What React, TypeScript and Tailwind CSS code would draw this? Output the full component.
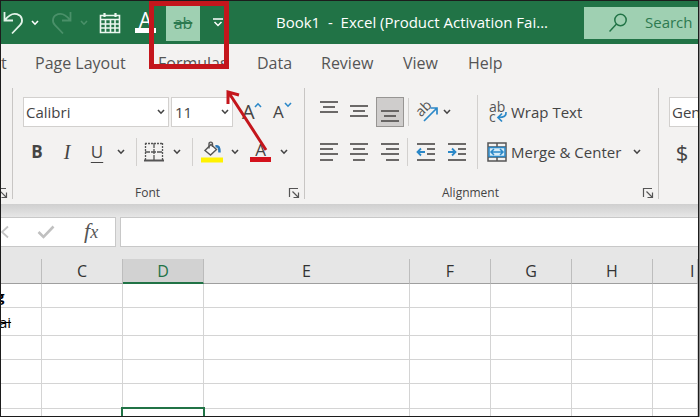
import type { ReactNode } from "react"

const columns = [
  { name: "B", width: "w-[41px]" },
  { name: "C", width: "w-[81px]" },
  { name: "D", width: "w-[81px]" },
  { name: "E", width: "w-[206px]" },
  { name: "F", width: "w-[81px]" },
  { name: "G", width: "w-[81px]" },
  { name: "H", width: "w-[81px]" },
  { name: "I", width: "" },
]

const rows = [
  { id: 1, height: "h-6" },
  { id: 2, height: "h-7" },
  { id: 3, height: "h-6" },
  { id: 4, height: "h-6" },
  { id: 5, height: "h-[25px]" },
  { id: 6, height: "h-6" },
]

const tabs = [
  { name: "Page Layout", width: "w-[94px]" },
  { name: "Formulas", width: "w-[70px]" },
  { name: "Data", width: "w-[35px]" },
  { name: "Review", width: "w-[53px]" },
  { name: "View", width: "w-9" },
  { name: "Help", width: "w-9" },
]

function Chevron({ className = "" }: { className?: string }) {
  return (
    <svg viewBox="0 0 8 6" className={`h-[6px] w-2 shrink-0 ${className}`} fill="none" stroke="currentColor" strokeWidth="1.6">
      <path d="M1 1l3 3.2L7 1" />
    </svg>
  )
}

function IconButton({ label, className = "w-5", children }: { label: string; className?: string; children: ReactNode }) {
  return (
    <button type="button" aria-label={label} className={`flex h-[30px] shrink-0 items-center justify-center ${className}`}>
      {children}
    </button>
  )
}

// Horizontal strokes of an alignment icon, each as [x1, x2, y]
function Lines({ lines, children }: { lines: number[][]; children?: ReactNode }) {
  return (
    <svg viewBox="0 0 20 30" className="h-[30px] w-5" fill="none" stroke="#5c5a58" strokeWidth="1.8">
      {lines.map(([x1, x2, y]) => (
        <path key={y} d={`M${x1} ${y}H${x2}`} />
      ))}
      {children}
    </svg>
  )
}

function Divider({ className = "h-7" }: { className?: string }) {
  return <div className={`w-px shrink-0 bg-[#d2d0ce] ${className}`} />
}

function Launcher({ label }: { label: string }) {
  return (
    <button type="button" aria-label={label} className="shrink-0">
      <svg viewBox="0 0 12 12" className="size-3" fill="none" stroke="#555" strokeWidth="1.2">
        <path d="M1.5 10V1.5H10M4.5 4.5l6 6M10.500 5.500v5h-5" />
      </svg>
    </button>
  )
}

function TitleBar() {
  return (
    <header className="flex h-[43px] shrink-0 items-center bg-[#217346] text-white">
      <button type="button" aria-label="Undo" className="ml-px">
        <svg viewBox="0 0 22 24" className="h-6 w-[22px]" fill="none" stroke="#e3f3e9" strokeWidth="1.8">
          <path d="M2.500 1v8.500H11M3 9C6.500 4.500 11 2 15 3.200c5.500 1.800 6.500 7.300 3 11L10 22.500" />
        </svg>
      </button>
      <button type="button" aria-label="Undo history" className="ml-[7px]">
        <Chevron />
      </button>
      <button type="button" aria-label="Redo" className="ml-3 text-[#4a9069]">
        <svg viewBox="0 0 22 24" className="h-6 w-[22px]" fill="none" stroke="currentColor" strokeWidth="1.8">
          <path d="M19.500 1v8.500H11M19 9C15.500 4.500 11 2 7 3.200c-5.500 1.800-6.500 7.300-3 11L12 22.500" />
        </svg>
      </button>
      <button type="button" aria-label="Redo history" className="ml-[7px] text-[#4a9069]">
        <Chevron />
      </button>
      <button type="button" aria-label="Calendar" className="ml-[11px]">
        <svg viewBox="0 0 22 22" className="size-[22px]" fill="none" stroke="#eaf6ee" strokeWidth="1.6">
          <path d="M1.500 3.500h19v17h-19zM1.500 7.500h19M1.500 12h19M1.500 16h19M6.500 7.500v13M11.500 7.500v13M16 7.500v13" />
          <path d="M5.500 1v4M16.500 1v4" strokeWidth="2.200" />
        </svg>
      </button>
      <button type="button" aria-label="Font Color" className="ml-[14px] flex w-[21px] flex-col items-center text-[21px] leading-[16px]">
        A
        <span className="h-[5px] w-full bg-white" />
      </button>
      <button type="button" aria-label="Strikethrough" className="ml-[10px] flex h-9 w-[34px] items-center justify-center bg-[#9fd0b2] text-base text-[#2d7a50]">
        <s className="decoration-2">ab</s>
      </button>
      <button type="button" aria-label="Customize Quick Access Toolbar" className="ml-[13px]">
        <svg viewBox="0 0 10 9" className="h-[9px] w-[10px]" fill="none" stroke="#fff" strokeWidth="1.500">
          <path d="M0 1h10M1.500 4L5 7.500 8.500 4" />
        </svg>
      </button>
      <h1 className="ml-[53px] w-[308px] shrink-0 whitespace-pre text-[15px]">Book1  -  Excel (Product Activation Fai...</h1>
      <label className="flex h-8 min-w-0 flex-1 items-center overflow-hidden bg-[#9fd0b2] pl-[25px] text-[#217346]">
        <svg viewBox="0 0 18 20" className="h-5 w-[18px] shrink-0" fill="none" stroke="currentColor" strokeWidth="1.500">
          <circle cx="11.500" cy="7" r="5.700" />
          <path d="M7.500 11L.5 18.500" />
        </svg>
        <input aria-label="Search" placeholder="Search" className="ml-[18px] w-full min-w-0 bg-transparent text-[15px] outline-none placeholder:text-[#2d7a50]" />
      </label>
    </header>
  )
}

function Tabs() {
  return (
    <nav className="flex h-[38px] shrink-0 items-center gap-[29px] text-base text-[#555]">
      <button type="button" aria-label="Insert" className="w-[5px] text-left">
        t
      </button>
      {tabs.map((tab) => (
        <button key={tab.name} type="button" className={`shrink-0 whitespace-nowrap text-left ${tab.width}`}>
          {tab.name}
        </button>
      ))}
    </nav>
  )
}

function FontGroup() {
  return (
    <section className="flex w-[292px] shrink-0 flex-col border-r border-[#c8c6c4] pl-[10px]">
      <div className="mt-[9px] flex items-center">
        <label className="relative">
          <select aria-label="Font" className="h-[30px] w-[146px] appearance-none border border-[#d2d0ce] bg-white pl-[2px] text-[15px]">
            <option>Calibri</option>
          </select>
          <Chevron className="pointer-events-none absolute top-3 right-1" />
        </label>
        <label className="relative ml-[2px]">
          <select aria-label="Font Size" className="h-[30px] w-[62px] appearance-none border border-[#d2d0ce] bg-white pl-[3px] text-[15px]">
            <option>11</option>
          </select>
          <Chevron className="pointer-events-none absolute top-3 right-1" />
        </label>
        <button type="button" aria-label="Increase Font Size" className="ml-[9px] flex w-5 text-xl leading-5">
          A
          <Chevron className="-ml-px rotate-180 text-[#2b88c8]" />
        </button>
        <button type="button" aria-label="Decrease Font Size" className="ml-[11px] flex w-5 text-[17px] leading-5">
          A
          <Chevron className="text-[#2b88c8]" />
        </button>
      </div>
      <div className="mt-[10px] flex items-center text-[17px]">
        <IconButton label="Bold" className="w-7"><b>B</b></IconButton>
        <IconButton label="Italic" className="ml-[2px] w-7"><i className="font-['Liberation_Serif',serif] text-xl">I</i></IconButton>
        <IconButton label="Underline" className="ml-[2px] w-7"><u className="underline-offset-4">U</u></IconButton>
        <IconButton label="Underline style" className="w-5"><Chevron /></IconButton>
        <Divider className="ml-[5px] h-7" />
        <IconButton label="Borders" className="ml-[7px] w-5">
          <svg viewBox="0 0 20 20" className="size-5" fill="none" stroke="#555" strokeWidth="1.300">
            <path d="M1 1.500h18M1.500 1v17M18.500 1v17" strokeDasharray="2 1" />
            <path d="M10 1v17M1 10h18" strokeDasharray="5 1" />
            <path d="M0 18.500h20" strokeWidth="2" />
          </svg>
        </IconButton>
        <IconButton label="Border style" className="ml-[3px] w-5"><Chevron /></IconButton>
        <Divider className="ml-[5px] h-7" />
        <IconButton label="Fill Color" className="ml-2 w-[22px]">
          <svg viewBox="0 0 22 22" className="size-[22px]" fill="none" stroke="#555" strokeWidth="1.400">
            <path d="M10 3.500L15.500 8.500 9.500 14 4 9.500z" fill="#f8f8f8" />
            <path d="M8 7.500V3c0-2.500 3.500-2.500 3.500 0v3" />
            <path d="M14.500 5.500c3-1 4 1 4 6" stroke="#2b78b8" strokeWidth="2.500" />
            <path d="M0 19h22" stroke="#fff200" strokeWidth="5" />
          </svg>
        </IconButton>
        <IconButton label="Fill colors" className="ml-[2px] w-5"><Chevron /></IconButton>
        <IconButton label="Font Color" className="ml-[5px] w-[21px] flex-col">
          <span className="leading-[14px]">A</span>
          <span className="h-[5px] w-full bg-[#d4121c]" />
        </IconButton>
        <IconButton label="Font colors" className="ml-[3px] w-5"><Chevron /></IconButton>
      </div>
      <footer className="mt-auto flex items-center pr-1 text-xs leading-3">
        <span className="flex-1 pr-4 text-center">Font</span>
        <Launcher label="Font settings" />
      </footer>
    </section>
  )
}

function AlignmentGroup() {
  return (
    <section className="flex w-[354px] shrink-0 flex-col border-r border-[#c8c6c4] pl-[14px]">
      <div className="flex">
        <div className="w-[158px]">
          <div className="mt-[9px] flex items-center">
            <IconButton label="Top Align">
              <Lines lines={[[1, 19, 5], [4, 16, 10], [1, 19, 15]]} />
            </IconButton>
            <IconButton label="Middle Align" className="ml-[10px] w-5">
              <Lines lines={[[1, 19, 9], [4, 16, 14], [1, 19, 19]]} />
            </IconButton>
            <IconButton label="Bottom Align" className="ml-[7px] w-7 border border-[#979593] bg-[#cfcdcc]">
              <Lines lines={[[1, 19, 14], [4, 16, 19], [1, 19, 24]]} />
            </IconButton>
            <Divider className="ml-1 h-7" />
            <IconButton label="Orientation" className="ml-[7px] w-6">
              <svg viewBox="0 0 24 24" className="size-6 overflow-visible" fill="none">
                <text x="4" y="17" transform="rotate(-45 5 16)" fill="#555" fontSize="14">ab</text>
                <path d="M8 21L20.500 8.500M14.500 8h6.500v6.500" stroke="#2b88c8" strokeWidth="1.700" />
              </svg>
            </IconButton>
            <IconButton label="Orientation options" className="w-[14px]"><Chevron /></IconButton>
          </div>
          <div className="mt-[10px] flex items-center">
            <IconButton label="Align Left">
              <Lines lines={[[1, 19, 7], [1, 14, 12], [1, 19, 17], [1, 14, 23]]} />
            </IconButton>
            <IconButton label="Center" className="ml-[10px] w-5">
              <Lines lines={[[1, 19, 7], [4, 16, 12], [1, 19, 17], [4, 16, 23]]} />
            </IconButton>
            <IconButton label="Align Right" className="ml-[11px] w-5">
              <Lines lines={[[1, 19, 7], [6, 19, 12], [1, 19, 17], [6, 19, 23]]} />
            </IconButton>
            <Divider className="ml-[7px] h-7" />
            <IconButton label="Decrease Indent" className="ml-2 w-5">
              <Lines lines={[[1, 19, 7], [11, 19, 12], [11, 19, 17], [1, 19, 23]]}>
                <path d="M9 15H2M5 11.500L1.500 15 5 18.500" stroke="#2b88c8" />
              </Lines>
            </IconButton>
            <IconButton label="Increase Indent" className="ml-[11px] w-5">
              <Lines lines={[[1, 19, 7], [11, 19, 12], [11, 19, 17], [1, 19, 23]]}>
                <path d="M1 15h7M5 11.500L8.500 15 5 18.500" stroke="#2b88c8" />
              </Lines>
            </IconButton>
          </div>
        </div>
        <Divider className="mt-[7px] h-[74px]" />
        <div className="ml-2 flex-1 text-[15px]">
          <button type="button" className="mt-[9px] flex h-[30px] items-center whitespace-nowrap">
            <span className="relative flex w-[22px] flex-col pl-[3px] text-left text-sm leading-[10px] text-[#555]">
              <span>ab</span>
              <span>c</span>
              <svg viewBox="0 0 12 12" className="absolute right-0 -bottom-px size-3" fill="none" stroke="#2b88c8" strokeWidth="1.700">
                <path d="M10 1c.5 4-2 5.500-7.500 5.500M6 2.500l-4 4 4 4" />
              </svg>
            </span>
            <span className="ml-[3px]">Wrap Text</span>
          </button>
          <div className="mt-[10px] flex items-center">
            <button type="button" className="flex h-[30px] w-[136px] items-center whitespace-nowrap">
              <svg viewBox="0 0 22 20" className="h-5 w-[22px] shrink-0" fill="none" stroke="#555" strokeWidth="1.500">
                <path d="M2 1h18v18H2zM11 1v4M11 15v4M2 5h18M2 15h18" />
                <path d="M3 5.500h16v9H3z" fill="#d7ecf8" stroke="#2b88c8" />
                <path d="M5.500 10h11M8 7l-3 3 3 3M14 7l3 3-3 3" stroke="#2b88c8" />
              </svg>
              <span className="ml-[3px]">Merge &amp; Center</span>
            </button>
            <IconButton label="Merge options" className="ml-[5px] w-5"><Chevron /></IconButton>
          </div>
        </div>
      </div>
      <footer className="mt-auto flex items-center pr-1 text-xs leading-3">
        <span className="flex-1 pr-5 text-center">Alignment</span>
        <Launcher label="Alignment settings" />
      </footer>
    </section>
  )
}

function Ribbon() {
  return (
    <div className="flex h-[122px] shrink-0 pt-[6px] pb-[5px] text-[#444]">
      <section className="flex w-[12px] shrink-0 items-end justify-end border-r border-[#c8c6c4] pr-1">
        <Launcher label="Clipboard settings" />
      </section>
      <FontGroup />
      <AlignmentGroup />
      <section className="min-w-0 flex-1 overflow-hidden pl-[10px]">
        <select aria-label="Number Format" className="mt-[9px] block h-[30px] w-[146px] appearance-none border border-[#d2d0ce] bg-white pl-[2px] text-[15px]">
          <option>General</option>
        </select>
        <IconButton label="Accounting Number Format" className="mt-[10px] w-[26px] text-[22px]">$</IconButton>
      </section>
    </div>
  )
}

function FormulaBar() {
  return (
    <div className="flex shrink-0 gap-1 bg-[#e6e6e6] pb-3 text-[#777]">
      <div className="flex h-[30px] w-[115px] shrink-0 items-center border border-l-0 border-[#c8c8c8] bg-white">
        <button type="button" aria-label="Cancel">
          <svg viewBox="0 0 8 14" className="h-[14px] w-2" fill="none" stroke="#c4c4c4" strokeWidth="1.800">
            <path d="M7 1.500L1 7l6 5.500" />
          </svg>
        </button>
        <button type="button" aria-label="Enter" className="ml-7">
          <svg viewBox="0 0 18 14" className="h-[14px] w-[18px]" fill="none" stroke="#c0c0c0" strokeWidth="2.600">
            <path d="M1.500 7L6.500 12 16.500 1.500" />
          </svg>
        </button>
        <button type="button" aria-label="Insert Function" className="ml-[29px] flex items-baseline font-['Liberation_Serif',serif] text-[22px] leading-6 text-[#555] italic">
          f<span className="text-lg">x</span>
        </button>
      </div>
      <input aria-label="Formula Bar" className="h-[30px] min-w-0 flex-1 border border-r-0 border-[#c8c8c8] bg-white px-2 outline-none" />
    </div>
  )
}

function Sheet() {
  return (
    <div className="min-h-0 flex-1 overflow-hidden bg-white">
      <table className="w-full table-fixed border-separate border-spacing-0">
        <thead>
          <tr className="h-[25px] bg-[#e6e6e6] text-base leading-5 text-[#333]">
            {columns.map((col) => (
              <th
                key={col.name}
                className={`border-r border-b p-0 font-normal ${col.width} ${
                  col.name === "D" ? "border-r-[#bbb] border-b-2 border-b-[#217346] bg-[#d2d2d2] text-[#217346]" : "border-r-[#bdbdbd] border-b-[#9f9f9f]"
                } ${col.name === "I" ? "pl-[37px] text-left" : ""}`}
              >
                {col.name === "B" ? "" : col.name}
              </th>
            ))}
          </tr>
        </thead>
        <tbody className="text-[15px] leading-5 text-black">
          {rows.map((row) => (
            <tr key={row.id} className={row.height}>
              {columns.map((col) => (
                <td key={col.name} className="relative border-r border-b border-[#d4d4d4] p-0">
                  {col.name === "B" && row.id === 1 && <b className="-ml-[5px]">g</b>}
                  {col.name === "B" && row.id === 2 && <s className="-ml-[2px]">ai</s>}
                  {col.name === "D" && row.id === 6 && <div className="absolute -inset-x-[2px] -top-[2px] -bottom-px border-2 border-[#217346]" />}
                </td>
              ))}
            </tr>
          ))}
        </tbody>
      </table>
    </div>
  )
}

// Red frame round the strikethrough button, with the arrow that points at it
function Callout() {
  return (
    <>
      <div className="pointer-events-none absolute top-0 left-[148px] h-[68px] w-20 border-[5px] border-[#c4161c]" />
      <svg viewBox="0 0 44 62" className="pointer-events-none absolute top-[89px] left-[225px] h-[62px] w-11" fill="none" stroke="#c4161c" strokeWidth="3">
        <path d="M40 60L3 3M2 14V2l11 3" />
      </svg>
    </>
  )
}

export default function App() {
  return (
    <div className="h-screen bg-[#888] pr-px font-['Open_Sans',sans-serif]">
      <div className="relative flex h-full flex-col overflow-hidden border border-[#1c1c1c] bg-[#f3f2f1]">
        <TitleBar />
        <Tabs />
        <Ribbon />
        <div className="h-[13px] shrink-0 bg-linear-to-b from-[#cfcfcf] to-[#e6e6e6]" />
        <FormulaBar />
        <Sheet />
        <Callout />
      </div>
    </div>
  )
}
